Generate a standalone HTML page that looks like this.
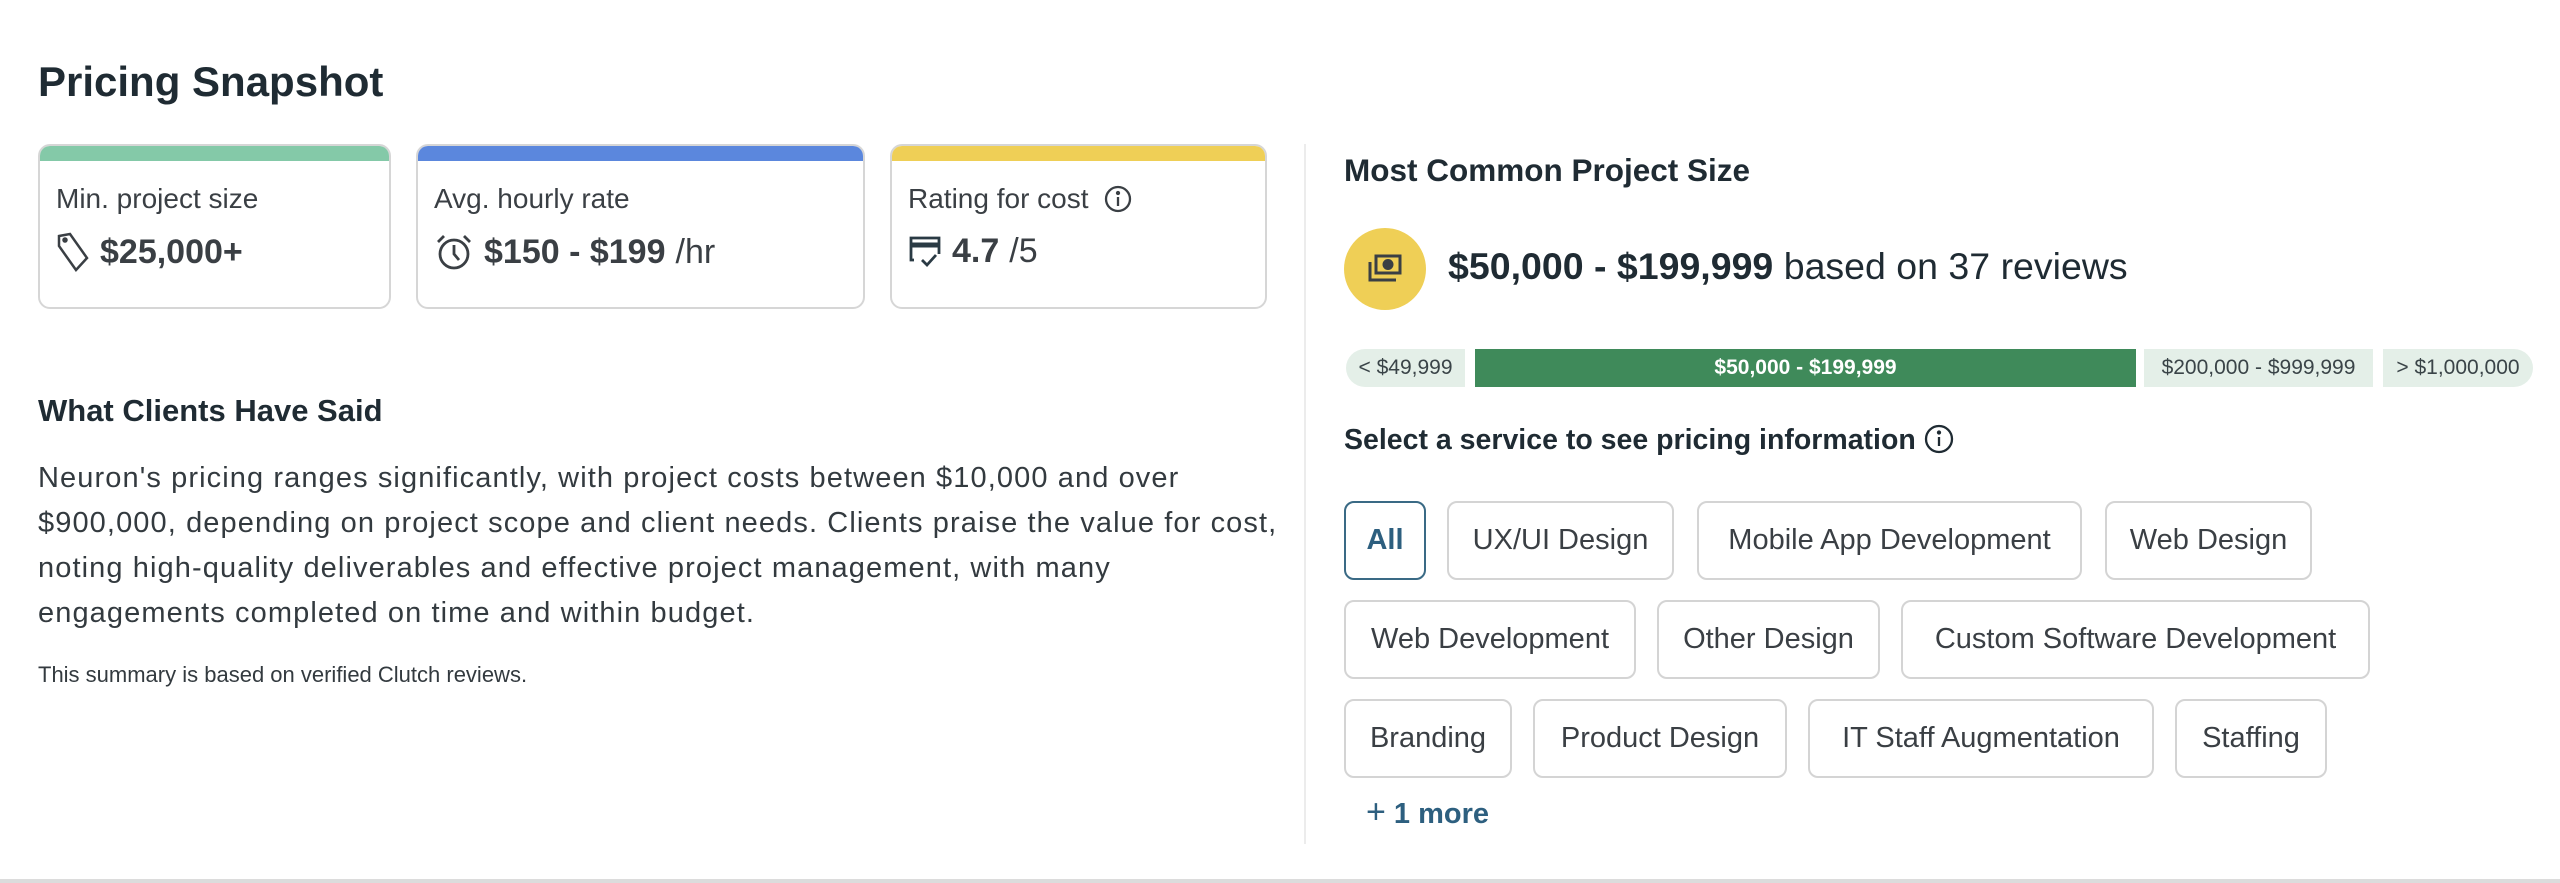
<!DOCTYPE html>
<html><head><meta charset="utf-8"><style>
*{box-sizing:border-box;margin:0;padding:0}
body{width:2560px;height:883px;background:#fff;font-family:"Liberation Sans",sans-serif;color:#1f2b33;position:relative;overflow:hidden}
.a{position:absolute;white-space:nowrap}
.card{position:absolute;top:144px;height:165px;border:2px solid #d6d6d6;border-radius:12px;overflow:hidden;background:#fff}
.card .bar{position:absolute;left:0;right:0;top:0;height:15px}
.card .lbl{position:absolute;left:16px;top:37px;font-size:28px;color:#3a3f44}
.card .val{position:absolute;left:16px;top:86px;font-size:34px;font-weight:bold;color:#3a3f44;display:flex;align-items:center;gap:10px}
.card .val span.n{font-weight:normal}
.chip{position:absolute;height:79px;border:2px solid #d4d4d4;border-radius:10px;font-size:29px;color:#3a3f44;display:flex;align-items:center;justify-content:center;white-space:nowrap}
.seg{position:absolute;top:349px;height:38px;background:#e4efe8;font-size:21px;color:#3a4448;display:flex;align-items:center;justify-content:center}
p.t{font-size:29px;letter-spacing:1.1px;line-height:45px;color:#333a3f}
</style></head><body>
<div class="a" style="left:38px;top:58px;font-size:42px;font-weight:bold">Pricing Snapshot</div>

<div class="card" style="left:38px;width:353px">
  <div class="bar" style="background:#84c9a8"></div>
  <div class="lbl">Min. project size</div>
  <div class="val"><svg width="34" height="40" viewBox="0 0 34 40" fill="none" stroke="#3a3f44" stroke-width="2.5"><path d="M3 4 L14 2 L31 26 L20 38 L3 14 Z"/><circle cx="9" cy="8" r="1.5" fill="#3a3f44"/></svg>$25,000+</div>
</div>
<div class="card" style="left:416px;width:449px">
  <div class="bar" style="background:#5b87dd"></div>
  <div class="lbl">Avg. hourly rate</div>
  <div class="val"><svg width="40" height="40" viewBox="0 0 40 40" fill="none" stroke="#3a3f44" stroke-width="2.8"><circle cx="20" cy="22" r="14"/><path d="M20 13 V22 L25 28"/><path d="M4 10 L10 4 M36 10 L30 4"/></svg>$150 - $199 <span class="n">/hr</span></div>
</div>
<div class="card" style="left:890px;width:377px">
  <div class="bar" style="background:#efcf56"></div>
  <div class="lbl">Rating for cost <svg style="vertical-align:-5px;margin-left:8px" width="28" height="28" viewBox="0 0 28 28" fill="none" stroke="#3a3f44" stroke-width="2.3"><circle cx="14" cy="14" r="12"/><path d="M14 12 V21"/><circle cx="14" cy="8" r="1" fill="#3a3f44"/></svg></div>
  <div class="val"><svg width="34" height="36" viewBox="0 0 34 36" fill="none" stroke="#2a3a44" stroke-width="2.8"><path d="M6 26 H3 V4 H31 V20"/><path d="M3 11 H31" stroke-width="5"/><path d="M14 26 L19 31 L28 21"/></svg>4.7 <span class="n">/5</span></div>
</div>

<div class="a" style="left:38px;top:393px;font-size:31px;font-weight:bold">What Clients Have Said</div>
<div class="a" style="left:38px;top:456px"><p class="t">Neuron's pricing ranges significantly, with project costs between $10,000 and over<br>$900,000, depending on project scope and client needs. Clients praise the value for cost,<br>noting high-quality deliverables and effective project management, with many<br>engagements completed on time and within budget.</p></div>
<div class="a" style="left:38px;top:662px;font-size:22px;color:#333a3f">This summary is based on verified Clutch reviews.</div>

<div class="a" style="left:1304px;top:144px;width:2px;height:700px;background:#ececec"></div>

<div class="a" style="left:1344px;top:152px;font-size:31.5px;font-weight:bold">Most Common Project Size</div>
<div class="a" style="left:1344px;top:228px;width:82px;height:82px;border-radius:50%;background:#efcf56;display:flex;align-items:center;justify-content:center">
<svg width="36" height="32" viewBox="0 0 36 32" fill="none" stroke="#3a3f44" stroke-width="3"><rect x="9" y="3" width="24" height="17"/><circle cx="21" cy="11.5" r="4" fill="#3a3f44"/><path d="M3 9 V27 H29"/></svg></div>
<div class="a" style="left:1448px;top:245px;font-size:37.5px"><b>$50,000 - $199,999</b> based on 37 reviews</div>

<div class="seg" style="left:1346px;width:119px;border-radius:19px 0 0 19px">&lt; $49,999</div>
<div class="seg" style="left:1475px;width:661px;background:#3f8a5a;color:#fff;font-weight:bold">$50,000 - $199,999</div>
<div class="seg" style="left:2144px;width:229px">$200,000 - $999,999</div>
<div class="seg" style="left:2383px;width:150px;border-radius:0 19px 19px 0">&gt; $1,000,000</div>

<div class="a" style="left:1344px;top:424px;font-size:28.5px;font-weight:bold">Select a service to see pricing information <svg style="vertical-align:-5px" width="30" height="30" viewBox="0 0 30 30" fill="none" stroke="#1f2b33" stroke-width="2.3"><circle cx="15" cy="15" r="13"/><path d="M15 13 V22"/><circle cx="15" cy="8.5" r="1" fill="#1f2b33"/></svg></div>

<div class="chip" style="left:1344px;top:501px;width:82px;border-color:#3a6a85;color:#2d5f7f;font-weight:bold">All</div>
<div class="chip" style="left:1447px;top:501px;width:227px">UX/UI Design</div>
<div class="chip" style="left:1697px;top:501px;width:385px">Mobile App Development</div>
<div class="chip" style="left:2105px;top:501px;width:207px">Web Design</div>

<div class="chip" style="left:1344px;top:600px;width:292px">Web Development</div>
<div class="chip" style="left:1657px;top:600px;width:223px">Other Design</div>
<div class="chip" style="left:1901px;top:600px;width:469px">Custom Software Development</div>

<div class="chip" style="left:1344px;top:699px;width:168px">Branding</div>
<div class="chip" style="left:1533px;top:699px;width:254px">Product Design</div>
<div class="chip" style="left:1808px;top:699px;width:346px">IT Staff Augmentation</div>
<div class="chip" style="left:2175px;top:699px;width:152px">Staffing</div>

<div class="a" style="left:1366px;top:793px;font-size:29px;color:#2d5f7f"><span style="font-weight:normal;font-size:34px">+</span> <b>1 more</b></div>

<div class="a" style="left:0;top:879px;width:2560px;height:4px;background:#dcdcdc"></div>
</body></html>
